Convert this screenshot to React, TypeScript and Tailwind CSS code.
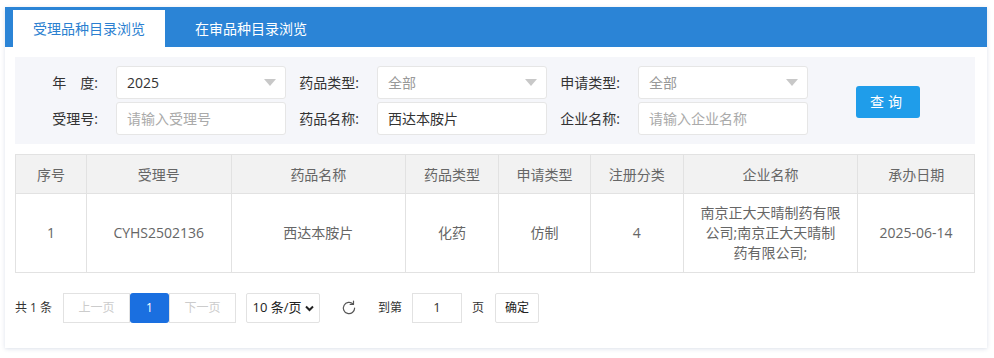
import React from "react";

const font = "font-['Open_Sans','Noto_Sans_CJK_SC',sans-serif]";

const Caret = () => (
  <svg width="12" height="7" viewBox="0 0 12 7" className="shrink-0">
    <path d="M0 0h12L6 7z" fill="#c8c8c8" />
  </svg>
);

const SelectBox = ({ value, muted }: { value: string; muted?: boolean }) => (
  <div className="flex h-[33px] w-[170px] items-center justify-between rounded-[3px] border border-[#e6e6e6] bg-white pl-[10px] pr-[9px]">
    <span className={muted ? "text-[#999]" : "text-[#333]"}>{value}</span>
    <Caret />
  </div>
);

const InputBox = ({ value, placeholder }: { value?: string; placeholder?: string }) => (
  <div className="flex h-[33px] w-[170px] items-center rounded-[3px] border border-[#e6e6e6] bg-white pl-[10px]">
    {value ? <span className="text-[#333]">{value}</span> : <span className="text-[#aaa]">{placeholder}</span>}
  </div>
);

const Label = ({ children, wide }: { children: React.ReactNode; wide?: boolean }) => (
  <div className={`${wide ? "w-[101px]" : "w-[91px]"} shrink-0 pr-[18px] text-right text-[#333]`}>{children}</div>
);

const cols = [
  { title: "序号", w: "w-[70px]" },
  { title: "受理号", w: "w-[145px]" },
  { title: "药品名称", w: "w-[175px]" },
  { title: "药品类型", w: "w-[93px]" },
  { title: "申请类型", w: "w-[92px]" },
  { title: "注册分类", w: "w-[93px]" },
  { title: "企业名称", w: "w-[175px]" },
  { title: "承办日期", w: "w-[117px]" },
];

const row = ["1", "CYHS2502136", "西达本胺片", "化药", "仿制", "4", "南京正大天晴制药有限公司;南京正大天晴制药有限公司;", "2025-06-14"];

export default function App() {
  return (
    <div className={`min-h-[358px] bg-white pl-[5px] pr-[7px] pt-[7px] text-[14px] ${font}`}>
      <div className="h-[341px] w-[982px] bg-white shadow-[0_1px_4px_rgba(60,90,140,0.18)]">
        {/* tabs */}
        <div className="flex h-[40px] items-end bg-[#2b84d6] pl-[8px]">
          <div className="flex h-[37px] w-[152px] items-center justify-center bg-white text-[#2b7fd0]">受理品种目录浏览</div>
          <div className="flex h-[37px] w-[172px] items-center justify-center text-white">在审品种目录浏览</div>
        </div>

        <div className="pl-[10px] pr-[12px]">
          {/* filters */}
          <div className="mt-[10px] flex h-[87px] items-center bg-[#f5f6fa]">
            <div className="flex flex-col gap-[3px]">
              <div className="flex items-center">
                <Label wide>年　度:</Label>
                <SelectBox value="2025" />
                <Label>药品类型:</Label>
                <SelectBox value="全部" muted />
                <Label>申请类型:</Label>
                <SelectBox value="全部" muted />
              </div>
              <div className="flex items-center">
                <Label wide>受理号:</Label>
                <InputBox placeholder="请输入受理号" />
                <Label>药品名称:</Label>
                <InputBox value="西达本胺片" />
                <Label>企业名称:</Label>
                <InputBox placeholder="请输入企业名称" />
              </div>
            </div>
            <button className="ml-[48px] mt-[2px] h-[32px] w-[64px] rounded-[3px] bg-[#1f9dea] tracking-[4px] text-white">查询</button>
          </div>

          {/* table */}
          <div className="mt-[10px] border border-[#e2e2e2] text-[#666]">
            <div className="flex h-[38px] bg-[#f2f2f2]">
              {cols.map((c, i) => (
                <div
                  key={c.title}
                  className={`${c.w} flex items-center justify-center ${i > 0 ? "border-l border-[#e2e2e2]" : ""}`}
                >
                  {c.title}
                </div>
              ))}
            </div>
            <div className="flex h-[79px] border-t border-[#e2e2e2]">
              {row.map((v, i) => (
                <div
                  key={i}
                  className={`${cols[i].w} flex items-center justify-center px-[16px] text-center leading-[20px] ${i > 0 ? "border-l border-[#e2e2e2]" : ""}`}
                >
                  {v}
                </div>
              ))}
            </div>
          </div>

          {/* pagination */}
          <div className="mt-[20px] flex h-[30px] items-center text-[12px] text-[#333]">
            <span className="w-[48px]">共 1 条</span>
            <div className="flex h-[30px] w-[67px] items-center justify-center border border-[#e2e2e2] text-[#ccc]">上一页</div>
            <div className="flex h-[30px] w-[39px] items-center justify-center rounded-[3px] bg-[#1a6fe0] text-white">1</div>
            <div className="flex h-[30px] w-[67px] items-center justify-center border border-[#e2e2e2] text-[#ccc]">下一页</div>
            <div className="ml-[10px] flex h-[30px] w-[74px] items-center justify-center gap-[3px] rounded-[2px] border border-[#e2e2e2] text-[13px] text-[#222]">
              10 条/页
              <svg width="9" height="7" viewBox="0 0 9 7">
                <path d="M1 1.5l3.5 3.5L8 1.5" fill="none" stroke="#222" strokeWidth="2" />
              </svg>
            </div>
            <svg width="18" height="18" viewBox="0 0 24 24" className="ml-[20px]">
              <path d="M19.5 12a7.5 7.5 0 1 1-2.2-5.3" fill="none" stroke="#555" strokeWidth="1.6" strokeLinecap="round" />
              <path d="M18 2.8v4.4h-4.4" fill="none" stroke="#555" strokeWidth="1.6" strokeLinecap="round" strokeLinejoin="round" />
            </svg>
            <span className="ml-[20px]">到第</span>
            <div className="ml-[10px] flex h-[30px] w-[50px] items-center justify-center border border-[#e2e2e2] text-[13px]">1</div>
            <span className="ml-[10px]">页</span>
            <div className="ml-[11px] flex h-[30px] w-[44px] items-center justify-center rounded-[2px] border border-[#e2e2e2] text-[#222]">确定</div>
          </div>
        </div>
      </div>
    </div>
  );
}
